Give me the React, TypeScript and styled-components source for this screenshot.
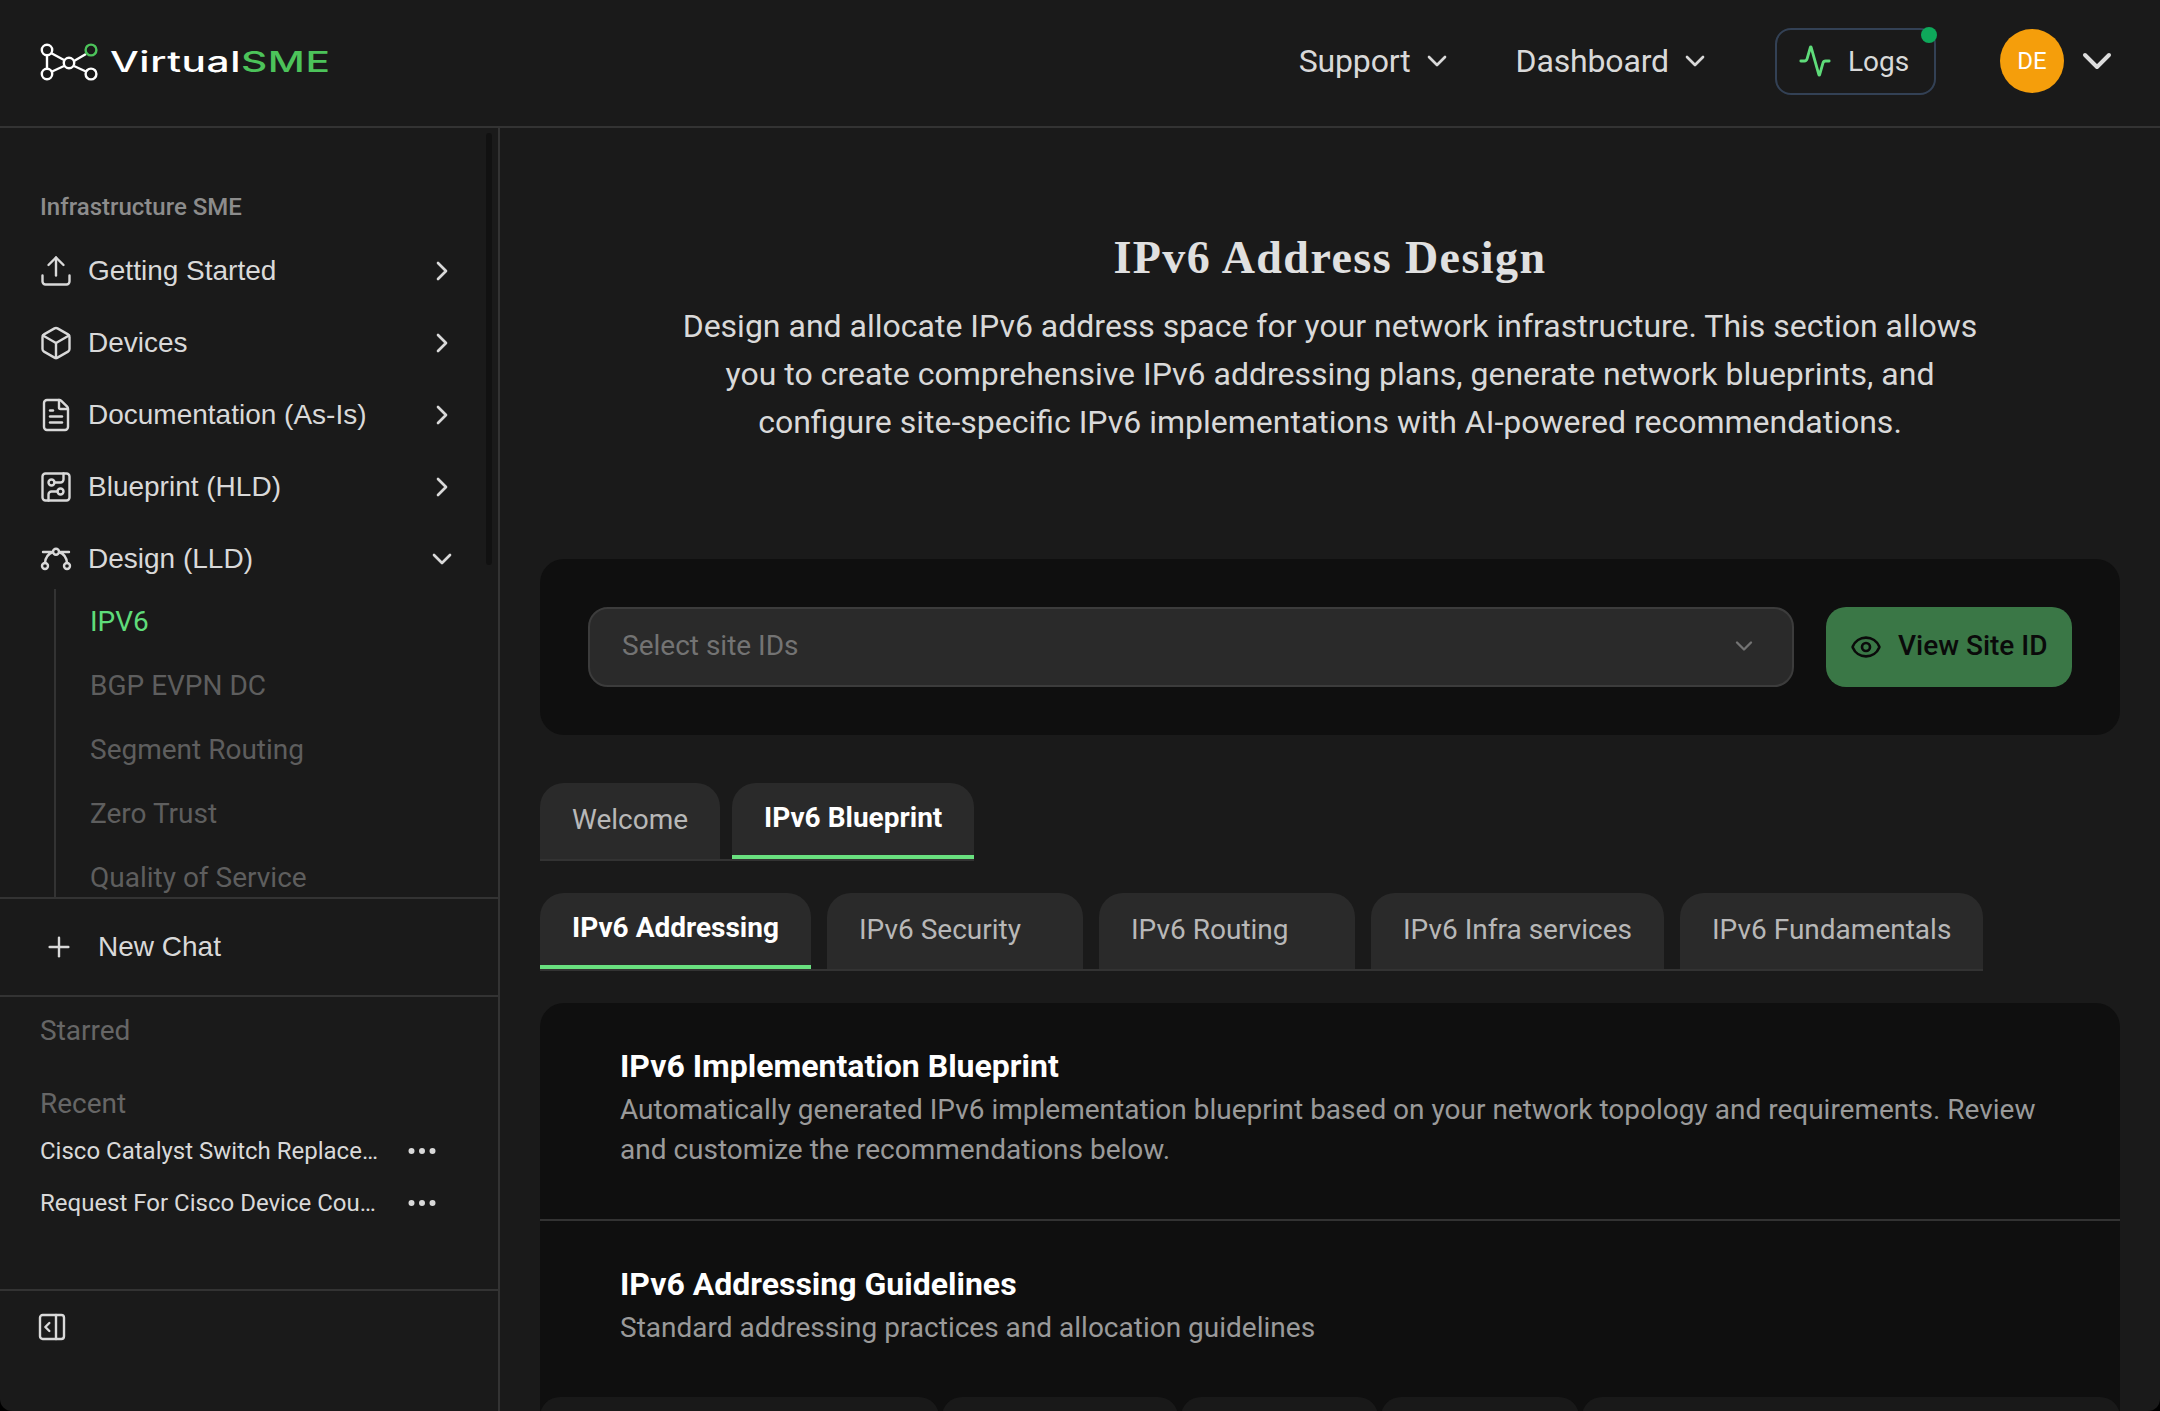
import React from "react";
import styled, { createGlobalStyle } from "styled-components";
import { Upload, Box, FileText, CircuitBoard, ChevronRight, ChevronDown, Activity, Eye, Plus, Ellipsis, PanelRightOpen } from "lucide-react";

const Global = createGlobalStyle`
  html, body { margin: 0; padding: 0; background: #000; }
  body { font-family: Roboto, "Liberation Sans", sans-serif; }
  * { box-sizing: border-box; }
`;

const Shell = styled.div`
  width: 2160px; height: 1411px; background: #1a1a1a; border-radius: 0 0 12px 12px;
  display: flex; flex-direction: column; overflow: hidden;
`;
const Header = styled.header`
  height: 128px; flex: none; display: flex; align-items: center; padding: 0 39px 2px 40px;
  border-bottom: 2px solid #333;
`;
const Logo = styled.div`display: flex; align-items: center; gap: 12px;`;
const Wordmark = styled.div`
  font-family: Inter, sans-serif; font-size: 28px; font-weight: 500; color: #fff;
  transform: scaleX(1.45); transform-origin: left center; letter-spacing: 0.4px;
  span { color: #4cc35a; }
`;
const HeaderRight = styled.div`margin-left: auto; margin-top: -2px; display: flex; align-items: center;`;
const TopLink = styled.div`
  display: flex; align-items: center; gap: 10px; font-size: 32px; letter-spacing: -0.15px; color: #d9d9d9; margin-right: 63px;
  padding-bottom: 1px;
`;
const LogsButton = styled.div`
  position: relative; width: 161px; height: 67px; border: 2px solid #334155; border-radius: 16px;
  display: flex; align-items: center; gap: 16px; padding-left: 21px; font-size: 28px; color: #d9d9d9;
  margin-left: 1px; margin-right: 64px;
`;
const Dot = styled.span`
  position: absolute; top: -3px; right: -3px; width: 16px; height: 16px; border-radius: 50%; background: #0ea85a;
`;
const Avatar = styled.div`
  width: 64px; height: 64px; border-radius: 50%; background: #f59e0b; color: #fff; font-size: 24px;
  display: flex; align-items: center; justify-content: center; margin-right: 9px;
`;
const Body = styled.div`flex: 1; display: flex; min-height: 0;`;
const Sidebar = styled.aside`
  width: 500px; flex: none; border-right: 2px solid #333; display: flex; flex-direction: column;
`;
const NavScroll = styled.div`
  position: relative; height: 769px; flex: none; overflow: hidden; padding: 62px 0 0 40px;
`;
const Scrollbar = styled.div`
  position: absolute; top: 5px; right: 6px; width: 6px; height: 432px; border-radius: 4px; background: #111;
`;
const SectionLabel = styled.div`
  font-size: 24px; line-height: 34px; color: #8c8c8c; font-weight: 500; margin-bottom: 11px;
`;
const NavItem = styled.div`
  height: 72px; display: flex; align-items: center; color: #d9d9d9; font-size: 28px; padding-right: 40px;
  font-family: "Liberation Sans", Arial, sans-serif;
  svg:first-child { width: 36px; height: 36px; margin-left: -2px; margin-right: 14px; stroke-width: 1.6; }
  span { flex: 1; }
`;
const SubList = styled.div`
  margin-left: 14px; border-left: 2px solid #333; padding-left: 34px; margin-top: -6px;
`;
const SubItem = styled.div<{ $active?: boolean }>`
  height: 64px; display: flex; align-items: center; font-size: 28px;
  color: ${(p) => (p.$active ? "#5fdc7a" : "#5e5e5e")};
`;
const NewChat = styled.div`
  height: 100px; flex: none; border-top: 2px solid #333; border-bottom: 2px solid #333;
  display: flex; align-items: center; gap: 23px; padding-left: 43px; color: #d9d9d9; font-size: 28px;
  font-family: "Liberation Sans", Arial, sans-serif;
`;
const History = styled.div`
  height: 294px; flex: none; border-bottom: 2px solid #333; padding: 15px 40px 0;
`;
const HistoryLabel = styled.div<{ $gap: number }>`
  font-size: 28px; line-height: 38px; color: #666; margin-bottom: ${(p) => p.$gap}px;
`;
const Chat = styled.div`
  height: 52px; display: flex; align-items: center; justify-content: space-between; padding-right: 18px;
  color: #d9d9d9; font-size: 24px;
  span { width: 338px; white-space: nowrap; overflow: hidden; text-overflow: ellipsis; }
`;
const Collapse = styled.div`
  padding: 20px 0 0 36px; color: #d9d9d9;
`;
const Main = styled.main`
  flex: 1; min-width: 0; overflow: hidden; padding: 0 40px;
`;
const Hero = styled.section`
  height: 431px; padding-top: 102px; text-align: center;
`;
const Title = styled.h1`
  margin: 0 0 16px; font-family: "Liberation Serif", serif; font-weight: 700; font-size: 46px; line-height: 56px;
  color: #e0e0e0; letter-spacing: 1.45px;
`;
const Desc = styled.p`
  margin: 0 auto; width: 1330px; font-size: 32px; line-height: 48px; color: #d9d9d9;
`;
const PickerCard = styled.section`
  height: 176px; background: #0f0f0f; border-radius: 24px; padding: 48px; display: flex; gap: 32px;
`;
const Select = styled.div`
  flex: 1; height: 80px; background: #2a2a2a; border: 2px solid #3c3c3c; border-radius: 20px;
  display: flex; align-items: center; justify-content: space-between; padding: 0 34px 3px 32px;
  color: #737373; font-size: 28px;
`;
const ViewButton = styled.div`
  width: 246px; height: 80px; background: #3a7746; border-radius: 20px; color: #0a0a0a;
  display: flex; align-items: center; gap: 16px; padding-left: 24px; font-size: 28px; font-weight: 500;
`;
const ViewLabel = styled.span`padding-bottom: 3px;`;
const Tabs = styled.div<{ $gap: number; $top: number }>`
  display: inline-flex; vertical-align: top; gap: ${(p) => p.$gap}px; margin-top: ${(p) => p.$top}px;
  border-bottom: 2px solid #333;
`;
const TabRow = styled.div`display: block;`;
const Tab = styled.div<{ $active?: boolean; $w: number }>`
  width: ${(p) => p.$w}px; height: 76px; background: #2a2a2a; border-radius: 24px 24px 0 0;
  padding: ${(p) => (p.$active ? "17px" : "19px")} 0 0 32px; font-size: 28px; line-height: 36px;
  color: ${(p) => (p.$active ? "#fff" : "#b8b8b8")}; font-weight: ${(p) => (p.$active ? 700 : 400)};
  border-bottom: ${(p) => (p.$active ? "4px solid #69e07f" : "none")};
`;
const ContentCard = styled.section`
  margin-top: 32px; background: #0f0f0f; border-radius: 24px 24px 0 0; height: 500px; overflow: hidden;
`;
const Block = styled.div<{ $h: number }>`
  height: ${(p) => p.$h}px; padding: 40px 60px 0 80px;
`;
const Rule = styled.div`height: 2px; background: #333;`;
const BlockTitle = styled.h2`
  margin: 0 0 1px; font-size: 32px; line-height: 46px; font-weight: 700; color: #fff;
`;
const BlockText = styled.p`
  margin: 0; font-size: 28px; line-height: 40px; color: #9a9a9a;
`;
const MiniTabs = styled.div`display: flex; gap: 3px;`;
const MiniTab = styled.div<{ $w: number }>`
  width: ${(p) => p.$w}px; height: 30px; background: #191919; border-radius: 20px 20px 0 0; flex: none;
`;

function LogoMark() {
  return (
    <svg width="58" height="38" viewBox="0 0 58 38" fill="none" stroke="#fff" strokeWidth="2.4">
      <path d="M11 10 L24 17 M11 29 L24 23 M7 12 V26 M34 18 L46 11 M34 23 L47 29" />
      <circle cx="7" cy="7" r="5.2" />
      <circle cx="7" cy="31" r="5.2" />
      <circle cx="29" cy="20" r="5.2" />
      <circle cx="51" cy="7" r="5.4" stroke="#4cc35a" />
      <circle cx="51" cy="31" r="5.4" />
    </svg>
  );
}
function BezierIcon() {
  return (
    <svg viewBox="0 0 36 36" fill="none" stroke="currentColor" strokeWidth="2.4" strokeLinecap="round" strokeLinejoin="round" style={{ strokeWidth: 2.4 }}>
      <circle cx="18" cy="10.7" r="3" />
      <circle cx="7" cy="25" r="3" />
      <circle cx="29" cy="25" r="3" />
      <path d="M7 22 C7.5 16 11 12.4 15 11 M29 22 C28.5 16 25 12.4 21 11 M5 11 H15 M21 11 H31" />
    </svg>
  );
}

const nav = [
  { label: "Getting Started", icon: <Upload /> },
  { label: "Devices", icon: <Box /> },
  { label: "Documentation (As-Is)", icon: <FileText /> },
  { label: "Blueprint (HLD)", icon: <CircuitBoard /> },
];
const subs = ["IPV6", "BGP EVPN DC", "Segment Routing", "Zero Trust", "Quality of Service"];

export default function App() {
  return (
    <Shell>
      <Global />
      <Header>
        <Logo>
          <LogoMark />
          <Wordmark>Virtual<span>SME</span></Wordmark>
        </Logo>
        <HeaderRight>
          <TopLink>Support <ChevronDown size={32} strokeWidth={2} /></TopLink>
          <TopLink>Dashboard <ChevronDown size={32} strokeWidth={2} /></TopLink>
          <LogsButton>
            <Dot />
            <Activity size={34} color="#5fdc7a" strokeWidth={2} />
            Logs
          </LogsButton>
          <Avatar>DE</Avatar>
          <ChevronDown size={48} color="#ddd" strokeWidth={2} />
        </HeaderRight>
      </Header>
      <Body>
        <Sidebar>
          <NavScroll>
            <Scrollbar />
            <SectionLabel>Infrastructure SME</SectionLabel>
            {nav.map((n) => (
              <NavItem key={n.label}>
                {n.icon}
                <span>{n.label}</span>
                <ChevronRight size={32} strokeWidth={2} />
              </NavItem>
            ))}
            <NavItem>
              <BezierIcon />
              <span>Design (LLD)</span>
              <ChevronDown size={32} strokeWidth={2} />
            </NavItem>
            <SubList>
              {subs.map((s, i) => (
                <SubItem key={s} $active={i === 0}>{s}</SubItem>
              ))}
            </SubList>
          </NavScroll>
          <NewChat><Plus size={32} strokeWidth={1.8} />New Chat</NewChat>
          <History>
            <HistoryLabel $gap={35}>Starred</HistoryLabel>
            <HistoryLabel $gap={2}>Recent</HistoryLabel>
            <Chat><span>Cisco Catalyst Switch Replacement Plan</span><Ellipsis size={36} /></Chat>
            <Chat><span>Request For Cisco Device Count Summary</span><Ellipsis size={36} /></Chat>
          </History>
          <Collapse><PanelRightOpen size={32} strokeWidth={1.8} /></Collapse>
        </Sidebar>
        <Main>
          <Hero>
            <Title>IPv6 Address Design</Title>
            <Desc>Design and allocate IPv6 address space for your network infrastructure. This section allows you to create comprehensive IPv6 addressing plans, generate network blueprints, and configure site-specific IPv6 implementations with AI-powered recommendations.</Desc>
          </Hero>
          <PickerCard>
            <Select>Select site IDs <ChevronDown size={28} strokeWidth={2} /></Select>
            <ViewButton><Eye size={32} strokeWidth={2} /><ViewLabel>View Site ID</ViewLabel></ViewButton>
          </PickerCard>
          <TabRow>
            <Tabs $gap={12} $top={48}>
              <Tab $w={180}>Welcome</Tab>
              <Tab $w={242} $active>IPv6 Blueprint</Tab>
            </Tabs>
          </TabRow>
          <TabRow>
            <Tabs $gap={16} $top={32}>
              <Tab $w={271} $active>IPv6 Addressing</Tab>
              <Tab $w={256}>IPv6 Security</Tab>
              <Tab $w={256}>IPv6 Routing</Tab>
              <Tab $w={293}>IPv6 Infra services</Tab>
              <Tab $w={303}>IPv6 Fundamentals</Tab>
            </Tabs>
          </TabRow>
          <ContentCard>
            <Block $h={216}>
              <BlockTitle>IPv6 Implementation Blueprint</BlockTitle>
              <BlockText>Automatically generated IPv6 implementation blueprint based on your network topology and requirements. Review and customize the recommendations below.</BlockText>
            </Block>
            <Rule />
            <Block $h={176}>
              <BlockTitle>IPv6 Addressing Guidelines</BlockTitle>
              <BlockText>Standard addressing practices and allocation guidelines</BlockText>
            </Block>
            <MiniTabs>
              <MiniTab $w={399} /><MiniTab $w={236} /><MiniTab $w={197} /><MiniTab $w={198} /><MiniTab $w={538} />
            </MiniTabs>
          </ContentCard>
        </Main>
      </Body>
    </Shell>
  );
}
